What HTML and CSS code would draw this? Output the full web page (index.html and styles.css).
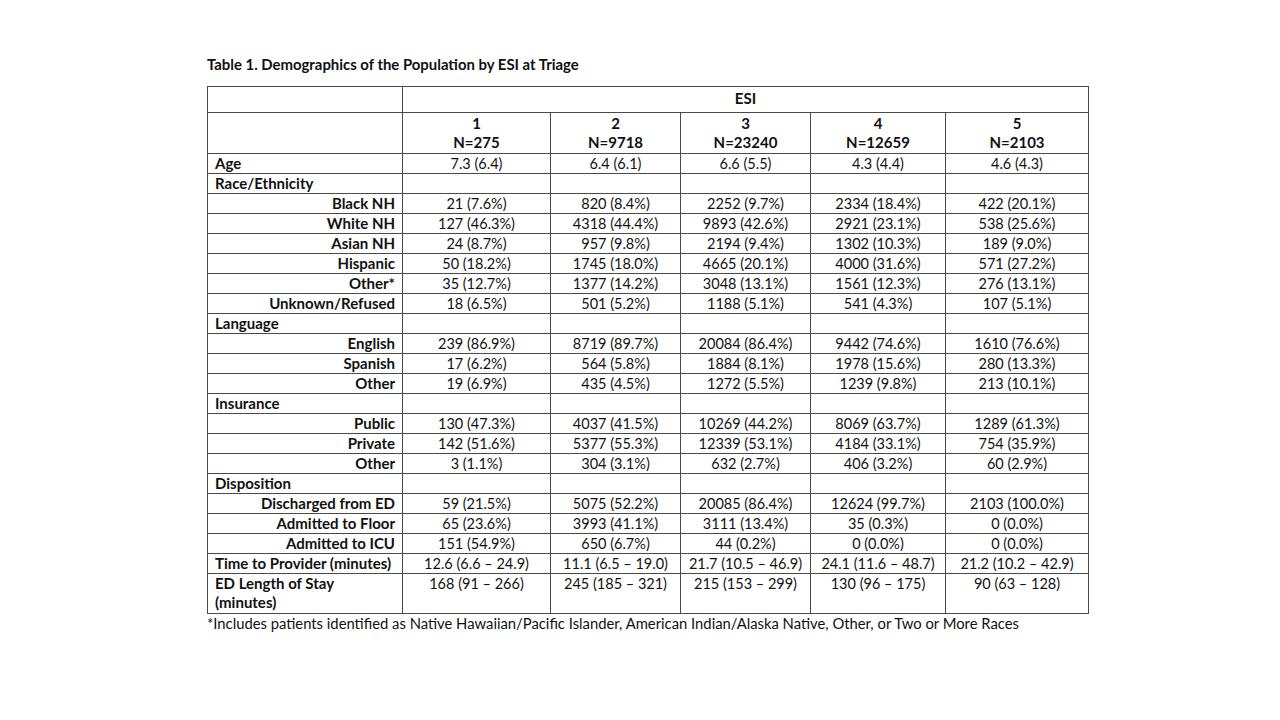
FILE: index.html
```html
<!DOCTYPE html>
<html>
<head>
<meta charset="utf-8">
<link rel="stylesheet" href="styles.css">
</head>
<body>
<div class="page">
  <div class="title">Table 1. Demographics of the Population by ESI at Triage</div>
  <table class="tbl">
    <colgroup>
      <col class="c0"><col class="c1"><col class="c2"><col class="c3"><col class="c4"><col class="c5">
    </colgroup>
    <tr class="r-esi"><td></td><td colspan="5" class="hd">ESI</td></tr>
    <tr class="r-n"><td></td><td class="hd">1<br>N=275</td><td class="hd">2<br>N=9718</td><td class="hd">3<br>N=23240</td><td class="hd">4<br>N=12659</td><td class="hd">5<br>N=2103</td></tr>
    <tr><td class="sec">Age</td><td>7.3 (6.4)</td><td>6.4 (6.1)</td><td>6.6 (5.5)</td><td>4.3 (4.4)</td><td>4.6 (4.3)</td></tr>
    <tr><td class="sec">Race/Ethnicity</td><td></td><td></td><td></td><td></td><td></td></tr>
    <tr><td class="sub">Black NH</td><td>21 (7.6%)</td><td>820 (8.4%)</td><td>2252 (9.7%)</td><td>2334 (18.4%)</td><td>422 (20.1%)</td></tr>
    <tr><td class="sub">White NH</td><td>127 (46.3%)</td><td>4318 (44.4%)</td><td>9893 (42.6%)</td><td>2921 (23.1%)</td><td>538 (25.6%)</td></tr>
    <tr><td class="sub">Asian NH</td><td>24 (8.7%)</td><td>957 (9.8%)</td><td>2194 (9.4%)</td><td>1302 (10.3%)</td><td>189 (9.0%)</td></tr>
    <tr><td class="sub">Hispanic</td><td>50 (18.2%)</td><td>1745 (18.0%)</td><td>4665 (20.1%)</td><td>4000 (31.6%)</td><td>571 (27.2%)</td></tr>
    <tr><td class="sub">Other*</td><td>35 (12.7%)</td><td>1377 (14.2%)</td><td>3048 (13.1%)</td><td>1561 (12.3%)</td><td>276 (13.1%)</td></tr>
    <tr><td class="sub">Unknown/Refused</td><td>18 (6.5%)</td><td>501 (5.2%)</td><td>1188 (5.1%)</td><td>541 (4.3%)</td><td>107 (5.1%)</td></tr>
    <tr><td class="sec">Language</td><td></td><td></td><td></td><td></td><td></td></tr>
    <tr><td class="sub">English</td><td>239 (86.9%)</td><td>8719 (89.7%)</td><td>20084 (86.4%)</td><td>9442 (74.6%)</td><td>1610 (76.6%)</td></tr>
    <tr><td class="sub">Spanish</td><td>17 (6.2%)</td><td>564 (5.8%)</td><td>1884 (8.1%)</td><td>1978 (15.6%)</td><td>280 (13.3%)</td></tr>
    <tr><td class="sub">Other</td><td>19 (6.9%)</td><td>435 (4.5%)</td><td>1272 (5.5%)</td><td>1239 (9.8%)</td><td>213 (10.1%)</td></tr>
    <tr><td class="sec">Insurance</td><td></td><td></td><td></td><td></td><td></td></tr>
    <tr><td class="sub">Public</td><td>130 (47.3%)</td><td>4037 (41.5%)</td><td>10269 (44.2%)</td><td>8069 (63.7%)</td><td>1289 (61.3%)</td></tr>
    <tr><td class="sub">Private</td><td>142 (51.6%)</td><td>5377 (55.3%)</td><td>12339 (53.1%)</td><td>4184 (33.1%)</td><td>754 (35.9%)</td></tr>
    <tr><td class="sub">Other</td><td>3 (1.1%)</td><td>304 (3.1%)</td><td>632 (2.7%)</td><td>406 (3.2%)</td><td>60 (2.9%)</td></tr>
    <tr><td class="sec">Disposition</td><td></td><td></td><td></td><td></td><td></td></tr>
    <tr><td class="sub">Discharged from ED</td><td>59 (21.5%)</td><td>5075 (52.2%)</td><td>20085 (86.4%)</td><td>12624 (99.7%)</td><td>2103 (100.0%)</td></tr>
    <tr><td class="sub">Admitted to Floor</td><td>65 (23.6%)</td><td>3993 (41.1%)</td><td>3111 (13.4%)</td><td>35 (0.3%)</td><td>0 (0.0%)</td></tr>
    <tr><td class="sub">Admitted to ICU</td><td>151 (54.9%)</td><td>650 (6.7%)</td><td>44 (0.2%)</td><td>0 (0.0%)</td><td>0 (0.0%)</td></tr>
    <tr><td class="sec">Time to Provider (minutes)</td><td>12.6 (6.6 – 24.9)</td><td>11.1 (6.5 – 19.0)</td><td>21.7 (10.5 – 46.9)</td><td>24.1 (11.6 – 48.7)</td><td>21.2 (10.2 – 42.9)</td></tr>
    <tr class="r-los"><td class="sec">ED Length of Stay<br>(minutes)</td><td>168 (91 – 266)</td><td>245 (185 – 321)</td><td>215 (153 – 299)</td><td>130 (96 – 175)</td><td>90 (63 – 128)</td></tr>
  </table>
  <div class="note">*Includes patients identified as Native Hawaiian/Pacific Islander, American Indian/Alaska Native, Other, or Two or More Races</div>
</div>
</body>
</html>
```

FILE: styles.css
```css
html, body {
  margin: 0;
  padding: 0;
  background: #ffffff;
}
body {
  font-family: "Lato", "Open Sans", "Liberation Sans", sans-serif;
  color: #111;
  font-size: 14.5px;
}
.page {
  padding: 55px 0 0 207px;
}
.title {
  font-weight: 700;
  font-size: 14.9px;
  line-height: 18px;
  height: 31px;
}
.tbl {
  border-collapse: collapse;
  table-layout: fixed;
  width: 881px;
}
.c0 { width: 195px; }
.c1 { width: 148px; }
.c2 { width: 130px; }
.c3 { width: 130px; }
.c4 { width: 135px; }
.c5 { width: 143px; }
.tbl td {
  border: 1px solid #4a4a4a;
  padding: 0 6px;
  height: 19px;
  line-height: 19px;
  text-align: center;
  vertical-align: top;
  white-space: nowrap;
}
.tbl td.hd {
  font-weight: 700;
  font-size: 15px;
}
.r-esi td {
  height: 25px;
  line-height: 22px;
}
.r-n td {
  height: 39px;
  line-height: 19px;
  padding-top: 1px;
}
.tbl td.sec {
  text-align: left;
  font-weight: 700;
  font-size: 15px;
  padding-left: 7px;
}
.tbl td.sub {
  text-align: right;
  font-weight: 700;
  font-size: 15px;
  padding-right: 7px;
}
.r-los td {
  height: 39px;
}
.note {
  font-size: 14.8px;
  line-height: 18px;
  padding-top: 0;
}
```
